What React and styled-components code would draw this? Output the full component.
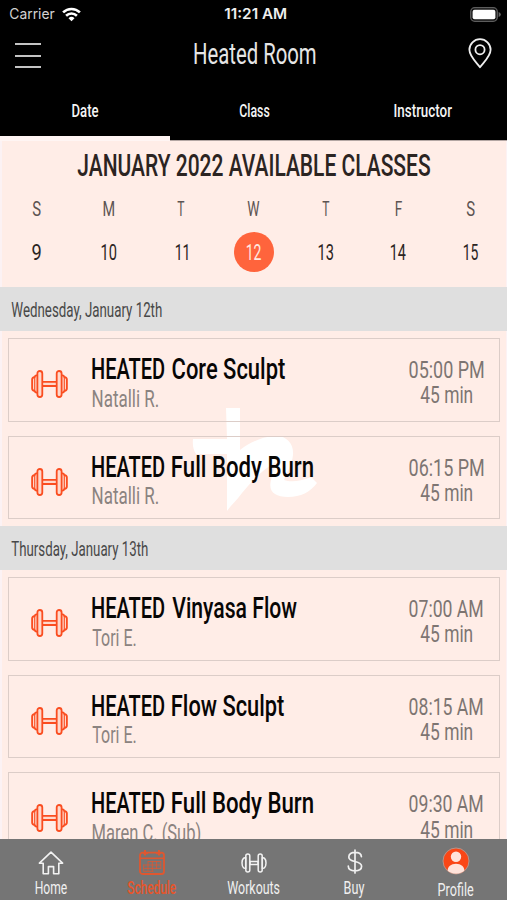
import React, { useLayoutEffect, useRef } from 'react';
import styled, { createGlobalStyle } from 'styled-components';

const Global = createGlobalStyle`
  *, *::before, *::after { box-sizing: border-box; }
  html, body { margin: 0; padding: 0; background: #ffede7; }
  body { font-family: Roboto, "Liberation Sans", sans-serif; overflow: hidden; }
`;

/* ---------- condensed lettering ---------- */

const FitBox = styled.div`
  flex: none;
  width: ${p => p.$w}px;
  height: ${p => p.$lh}px;
  line-height: ${p => p.$lh}px;
  font-size: ${p => p.$size}px;
  font-weight: ${p => p.$weight};
  color: ${p => p.$color};
  white-space: nowrap;
`;

const FitInner = styled.span`
  display: inline-block;
  transform-origin: 0 50%;
  vertical-align: top;
`;

// Squeezes a line of text horizontally so its ink spans exactly `w` pixels.
function Fit({ w, lh, size, weight = 400, color = 'inherit', children }) {
  const ref = useRef(null);
  useLayoutEffect(() => {
    const el = ref.current;
    const ctx = document.createElement('canvas').getContext('2d');
    const cs = getComputedStyle(el);
    ctx.font = `${cs.fontWeight} ${cs.fontSize} ${cs.fontFamily}`;
    const m = ctx.measureText(children);
    const left = -m.actualBoundingBoxLeft;
    const ink = m.actualBoundingBoxRight - left;
    const k = w / ink;
    el.style.transform = `translateX(${0.3 - left * k}px) scaleX(${k})`;
  }, [w, children]);
  return (
    <FitBox $w={w} $lh={lh} $size={size} $weight={weight} $color={color}>
      <FitInner ref={ref}>{children}</FitInner>
    </FitBox>
  );
}

/* ---------- layout ---------- */

const Screen = styled.div`
  width: 507px;
  height: 900px;
  display: flex;
  flex-direction: column;
  overflow: hidden;
  background: #ffede7;
`;

const Header = styled.header`
  flex: none;
  height: 141px;
  background: #000;
  color: #f4f4f4;
  display: flex;
  flex-direction: column;
`;

const StatusBar = styled.div`
  height: 28px;
  padding: 0 6px 0 9px;
  display: grid;
  grid-template-columns: 1fr auto 1fr;
  align-items: center;
  font-family: Inter, "Liberation Sans", sans-serif;
`;

const Carrier = styled.div`
  display: flex;
  align-items: center;
  gap: 7px;
`;

const BatterySlot = styled.div`
  display: flex;
  justify-content: flex-end;
`;

const NavBar = styled.div`
  height: 56px;
  padding: 0 15px 5px;
  display: flex;
  align-items: center;
  justify-content: space-between;
`;

const MenuButton = styled.button`
  width: 26px;
  height: 25px;
  margin-top: 4px;
  padding: 0;
  border: 0;
  background: none;
  display: flex;
  flex-direction: column;
  justify-content: space-between;
`;

const MenuLine = styled.span`
  height: 2px;
  background: #c4c4c4;
`;

const Tabs = styled.nav`
  flex: 1;
  display: grid;
  grid-template-columns: 170px 168px 169px;
`;

const Tab = styled.div`
  display: flex;
  justify-content: center;
  padding-top: 17px;
  border-bottom: ${p => (p.$active ? '5px solid #fff5f3' : '1px solid #b3a6a3')};
`;

const Content = styled.main`
  position: relative;
  isolation: isolate;
  flex: 1;
  min-height: 0;
  overflow: hidden;
  background: #ffede7;
  box-shadow: inset 2px 0 #fcf2f4, inset -1px 0 #fcf2f4;
`;

const Watermark = styled.svg`
  position: absolute;
  z-index: -1;
  left: 190px;
  top: 266px;
`;

const Calendar = styled.section`
  height: 146px;
  display: flex;
  flex-direction: column;
  align-items: center;
`;

const Heading = styled.div`
  margin-top: 8px;
  height: 34px;
`;

const Week = styled.div`
  flex: none;
  width: 507px;
  display: grid;
  grid-template-columns: repeat(7, 72.35px);
  justify-content: center;
  justify-items: center;
  height: ${p => p.$h}px;
  padding-top: ${p => p.$top || 0}px;
  align-items: center;
`;

const DateDot = styled.div`
  width: 40px;
  height: 40px;
  border-radius: 50%;
  display: flex;
  align-items: center;
  justify-content: center;
  padding-top: 2px;
  background: ${p => (p.$active ? '#ff643c' : 'transparent')};
`;

const DayBar = styled.div`
  height: 44px;
  padding: 3px 0 0 10.5px;
  display: flex;
  align-items: center;
  background: #dfdfdf;
`;

const CardList = styled.div`
  height: ${p => p.$h}px;
  padding: 7px 7px 0 8px;
  display: flex;
  flex-direction: column;
  gap: 14px;
`;

const Card = styled.article`
  flex: none;
  height: 83.7px;
  border: 1.5px solid #dccdc8;
  display: flex;
  align-items: flex-start;
`;

const CardIcon = styled.div`
  width: 82.7px;
  padding: 31px 0 0 22px;
`;

const CardInfo = styled.div`
  flex: 1;
  padding-top: 15px;
`;

const CardTitle = styled.div`
  display: flex;
  gap: 8px;
`;

const CardTime = styled.div`
  width: 75px;
  margin-right: 16px;
  padding-top: 19px;
  display: flex;
  flex-direction: column;
  align-items: center;
`;

const TabBar = styled.nav`
  flex: none;
  height: 61px;
  background: #757575;
  display: grid;
  grid-template-columns: repeat(5, 101.3px);
`;

const TabItem = styled.div`
  display: flex;
  flex-direction: column;
  align-items: center;
`;

const TabIcon = styled.div`
  height: ${p => p.$h || 39}px;
  padding-top: ${p => p.$top}px;
  padding-left: 1px;
`;

/* ---------- icons ---------- */

const Wifi = () => (
  <svg width="19" height="15" viewBox="0 0 19 15" fill="none" stroke="#fff" strokeWidth="2.6">
    <path d="M1.1 5.4a12 12 0 0 1 16.8 0" />
    <path d="M4.1 8.7a7.8 7.8 0 0 1 10.8 0" />
    <path d="M9.5 14.2 6.5 11.2a4.3 4.3 0 0 1 6 0z" fill="#fff" stroke="none" />
  </svg>
);

const Battery = () => (
  <svg width="31" height="15" viewBox="0 0 31 15">
    <rect x="0.7" y="0.7" width="26.6" height="13.6" rx="4" fill="#151515" stroke="#5d5d5d" strokeWidth="1.3" />
    <rect x="2.6" y="2.8" width="22.8" height="9.4" rx="2" fill="#fff" />
    <path d="M28.6 5q2.2.9 2.2 2.5t-2.2 2.5z" fill="#666" />
  </svg>
);

const Pin = () => (
  <svg width="24" height="31" viewBox="0 0 24 31" fill="none" stroke="#eee" strokeWidth="1.8">
    <path d="M12 29.2C8.5 24.5 1.4 18.3 1.4 11.8a10.6 10.6 0 0 1 21.2 0C22.6 18.3 15.5 24.5 12 29.2z" strokeLinejoin="round" />
    <circle cx="12" cy="11.7" r="4.6" />
  </svg>
);

const Dumbbell = () => (
  <svg width="37" height="28" viewBox="0 0 37 28" fill="#ffd9cc" stroke="#fa4d20" strokeWidth="1.8" strokeLinejoin="round" display="block">
    <rect x="11" y="11.8" width="15" height="4.2" />
    <path d="M7 5.4H5.4q-1.3 0-1.7 1.5Q1.1 7.6 1.1 9.6v8.8q0 2 2.6 2.7.4 1.5 1.7 1.5H7z" />
    <path d="M3.7 7v14" strokeWidth="1.1" />
    <rect x="6.4" y="1" width="4.9" height="26" rx="2.45" />
    <path d="M30 5.4h1.6q1.3 0 1.7 1.5 2.6.7 2.6 2.7v8.8q0 2-2.6 2.7-.4 1.5-1.7 1.5H30z" />
    <path d="M33.3 7v14" strokeWidth="1.1" />
    <rect x="25.7" y="1" width="4.9" height="26" rx="2.45" />
  </svg>
);

const SmallDumbbell = () => (
  <svg width="26" height="20" viewBox="0 0 26 20" fill="none" stroke="#f2f2f2" strokeWidth="1.5" strokeLinejoin="round" display="block">
    <path d="M9 8.6h8v2.8H9z" />
    <path d="M4.7 4.4 2.6 5.1Q1 6.6 1 10t1.6 4.9l2.1.7z" />
    <rect x="4.8" y="1" width="4" height="18" rx="2" />
    <path d="m21.3 4.4 2.1.7Q25 6.6 25 10t-1.6 4.9l-2.1.7z" />
    <rect x="17.2" y="1" width="4" height="18" rx="2" />
  </svg>
);

const Home = () => (
  <svg width="26" height="24" viewBox="0 0 26 24" fill="none" stroke="#f2f2f2" strokeWidth="1.6" strokeLinejoin="round" display="block">
    <path d="M13 1.2 1.4 12.2h3.8v10.6h5.2v-7.2h5.2v7.2h5.2V12.2h3.8z" />
  </svg>
);

const CalendarIcon = () => (
  <svg width="26" height="25" viewBox="0 0 26 25" fill="none" stroke="#df5730" display="block">
    <rect x="1" y="2.6" width="24" height="21.4" rx="2.6" strokeWidth="1.8" />
    <path d="M1 8.3h24" strokeWidth="1.6" />
    <path d="M6 0v5.4M20 0v5.4M4 3.2h5M17 3.2h5" strokeWidth="2" />
    <path d="M9 11.5h13M4.5 15h17.5M4.5 18.4h17.5M4.5 21.3h10M9 11v10.5M13.3 11v10.5M17.6 11v8M21.8 11v8M4.7 14.5v7" strokeWidth="0.9" opacity="0.85" />
  </svg>
);

const Dollar = () => (
  <svg width="16" height="25" viewBox="0 0 16 25" fill="none" stroke="#f0f0f0" strokeWidth="1.7" strokeLinecap="round" display="block">
    <path d="M8 1v23M14.4 7.6C14.2 4.8 11.5 3.4 8 3.4S1.8 5 1.8 7.9c0 3 2.7 3.8 6.2 4.6s6.6 1.7 6.6 4.8-2.8 4.5-6.6 4.5-6.6-1.6-6.7-4.6" />
  </svg>
);

const Avatar = () => (
  <svg width="28" height="28" viewBox="0 0 28 28" display="block">
    <clipPath id="avatar"><circle cx="14" cy="14" r="12.7" /></clipPath>
    <circle cx="14" cy="14" r="13" fill="#fa4616" stroke="#b5948b" strokeWidth="1" />
    <g clipPath="url(#avatar)" fill="#ffe3da">
      <circle cx="14" cy="9.8" r="5.2" />
      <path d="M5.6 28v-4.2c0-4 3.3-7 8.4-7s8.4 3 8.4 7V28z" />
    </g>
  </svg>
);

const Brand = () => (
  <Watermark width="128" height="106" viewBox="190 407 128 106" fill="#fff" aria-hidden="true">
    <path d="M226 408h14v42c9-7 21-13 34-14 13-1 20 8 19 19-1 10-6 17-9 25 6 2 15 2 27-3l6 6c-7 9-16 14-29 14-13 0-20-5-17-17 2-8 4-12 5-18-14 8-24 19-34 31-5 7-11 12-15 18V454h-31q-4-6-3-15h34z" />
  </Watermark>
);

/* ---------- data ---------- */

const tabs = [['Date', 26, true], ['Class', 30.5], ['Instructor', 57.5]];
const weekdays = [['S', 8.5], ['M', 11], ['T', 7.5], ['W', 12.5], ['T', 7.5], ['F', 6.5], ['S', 8.5]];
const dates = [['9', 8.5], ['10', 15], ['11', 12.5], ['12', 15], ['13', 15], ['14', 15.5], ['15', 15]];

const days = [
  {
    label: 'Wednesday, January 12th', w: 150.5, h: 195,
    classes: [
      ['Core Sculpt', 113, 'Natalli R.', 66, '05:00 PM', 74],
      ['Full Body Burn', 140.5, 'Natalli R.', 66, '06:15 PM', 74],
    ],
  },
  {
    label: 'Thursday, January 13th', w: 136.5, h: 290,
    classes: [
      ['Vinyasa Flow', 124.5, 'Tori E.', 43.5, '07:00 AM', 73],
      ['Flow Sculpt', 112, 'Tori E.', 43.5, '08:15 AM', 73],
      ['Full Body Burn', 140.5, 'Maren C. (Sub)', 108, '09:30 AM', 73],
    ],
  },
];

const nav = [
  { label: 'Home', w: 31.5, icon: <Home />, top: 12 },
  { label: 'Schedule', w: 49, icon: <CalendarIcon />, top: 10.5, active: true },
  { label: 'Workouts', w: 52.5, icon: <SmallDumbbell />, top: 14 },
  { label: 'Buy', w: 20.5, icon: <Dollar />, top: 9.5 },
  { label: 'Profile', w: 35, icon: <Avatar />, top: 7.5, h: 41 },
];

export default function App() {
  return (
    <Screen>
      <Global />
      <Header>
        <StatusBar>
          <Carrier>
            <Fit w={46} lh={28} size={14.5} color="#d2d2d2">Carrier</Fit>
            <Wifi />
          </Carrier>
          <Fit w={62.5} lh={28} size={14.5} weight={600} color="#efefef">11:21 AM</Fit>
          <BatterySlot><Battery /></BatterySlot>
        </StatusBar>
        <NavBar>
          <MenuButton aria-label="Menu"><MenuLine /><MenuLine /><MenuLine /></MenuButton>
          <Fit w={121.5} lh={40} size={30} weight={400} color="#e6e6e6">Heated Room</Fit>
          <Pin />
        </NavBar>
        <Tabs>
          {tabs.map(([label, w, active]) => (
            <Tab key={label} $active={active}>
              <Fit w={w} lh={20} size={17.5} weight={500}>{label}</Fit>
            </Tab>
          ))}
        </Tabs>
      </Header>
      <Content>
        <Brand />
        <Calendar>
          <Heading><Fit w={353} lh={34.5} size={30.5} weight={500} color="#2b2422">JANUARY 2022 AVAILABLE CLASSES</Fit></Heading>
          <Week $h={49} $top={3}>
            {weekdays.map(([d, w], i) => <Fit key={i} w={w} lh={24} size={21} color="#5c5452">{d}</Fit>)}
          </Week>
          <Week $h={40}>
            {dates.map(([d, w]) => (
              <DateDot key={d} $active={d === '12'}>
                <Fit w={w} lh={24} size={21.5} color={d === '12' ? '#ffe9e0' : '#2c2523'}>{d}</Fit>
              </DateDot>
            ))}
          </Week>
        </Calendar>
        {days.map(day => (
          <React.Fragment key={day.label}>
            <DayBar><Fit w={day.w} lh={24} size={19.5} color="#484848">{day.label}</Fit></DayBar>
            <CardList $h={day.h}>
              {day.classes.map(([title, tw, who, ww, time, cw]) => (
                <Card key={time}>
                  <CardIcon><Dumbbell /></CardIcon>
                  <CardInfo>
                    <CardTitle>
                      <Fit w={72.5} lh={29.5} size={30} weight={500} color="#080605">HEATED</Fit>
                      <Fit w={tw} lh={29.5} size={30} weight={500} color="#080605">{title}</Fit>
                    </CardTitle>
                    <Fit w={ww} lh={30} size={24} color="#8b8380">{who}</Fit>
                  </CardInfo>
                  <CardTime>
                    <Fit w={cw} lh={25.2} size={24} color="#7d7572">{time}</Fit>
                    <Fit w={52} lh={25.2} size={24} color="#7d7572">45 min</Fit>
                  </CardTime>
                </Card>
              ))}
            </CardList>
          </React.Fragment>
        ))}
      </Content>
      <TabBar>
        {nav.map(n => (
          <TabItem key={n.label}>
            <TabIcon $top={n.top} $h={n.h}>{n.icon}</TabIcon>
            <Fit w={n.w} lh={19} size={18} weight={n.active ? 500 : 400} color={n.active ? '#e5552b' : '#f0f0f0'}>{n.label}</Fit>
          </TabItem>
        ))}
      </TabBar>
    </Screen>
  );
}
